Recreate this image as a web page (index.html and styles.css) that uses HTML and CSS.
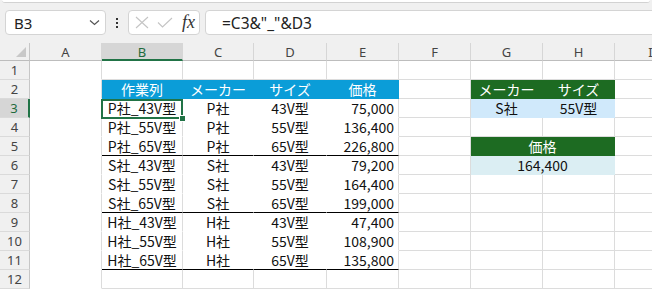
FILE: index.html
```html
<html>
<head>
    <title>Excel</title>
    <link rel="stylesheet" href="styles.css">
</head>
<body>
<div class="ribbon"></div>
<div class="toolbar">
    <div class="namebox">
        <span>B3</span>
        <svg width="11" height="7" viewBox="0 0 11 7"><path d="M1 1.5 L5.5 5.5 L10 1.5" fill="none" stroke="#555" stroke-width="1.2"/></svg>
    </div>
    <div class="more"><i></i><i></i><i></i></div>
    <div class="fxbox">
        <svg width="14" height="13" viewBox="0 0 14 13"><path d="M1 1 L13 12 M13 1 L1 12" stroke="#c4c4c4" stroke-width="1.1"/></svg>
        <svg width="16" height="11" viewBox="0 0 16 11"><path d="M1 5.5 L5.5 10 L15 1" fill="none" stroke="#c4c4c4" stroke-width="1.1"/></svg>
        <span class="fx">fx</span>
    </div>
    <div class="formula">=C3&amp;"_"&amp;D3</div>
</div>

<div class="sheet">
    <!-- column headers -->
    <div class="corner"></div>
    <div class="ch">A</div>
    <div class="ch on">B</div>
    <div class="ch">C</div>
    <div class="ch">D</div>
    <div class="ch">E</div>
    <div class="ch">F</div>
    <div class="ch">G</div>
    <div class="ch">H</div>
    <div class="ch">I</div>

    <!-- 1 -->
    <div class="rh">1</div>
    <div class="c nb"></div><div class="c"></div><div class="c"></div><div class="c"></div><div class="c"></div>
    <div class="c"></div><div class="c"></div><div class="c"></div><div class="c"></div>

    <!-- 2 -->
    <div class="rh">2</div>
    <div class="c nb"></div>
    <div class="c blue">作業列</div><div class="c blue">メーカー</div><div class="c blue">サイズ</div><div class="c blue">価格</div>
    <div class="c"></div>
    <div class="c green">メーカー</div><div class="c green">サイズ</div>
    <div class="c"></div>

    <!-- 3 -->
    <div class="rh on">3</div>
    <div class="c nb"></div>
    <div class="c nb sel">P社_43V型</div><div class="c nb nr">P社</div><div class="c nb nr">43V型</div><div class="c nb num">75,000</div>
    <div class="c"></div>
    <div class="c light">S社</div><div class="c light">55V型</div>
    <div class="c"></div>

    <!-- 4 -->
    <div class="rh">4</div>
    <div class="c nb"></div>
    <div class="c nb">P社_55V型</div><div class="c nb nr">P社</div><div class="c nb nr">55V型</div><div class="c nb num">136,400</div>
    <div class="c"></div><div class="c"></div><div class="c"></div><div class="c"></div>

    <!-- 5 -->
    <div class="rh">5</div>
    <div class="c nb"></div>
    <div class="c bk">P社_65V型</div><div class="c bk nr">P社</div><div class="c bk nr">65V型</div><div class="c bk num">226,800</div>
    <div class="c"></div>
    <div class="c green span2">価格</div>
    <div class="c"></div>

    <!-- 6 -->
    <div class="rh">6</div>
    <div class="c nb"></div>
    <div class="c nb">S社_43V型</div><div class="c nb nr">S社</div><div class="c nb nr">43V型</div><div class="c nb num">79,200</div>
    <div class="c"></div>
    <div class="c pale span2">164,400</div>
    <div class="c"></div>

    <!-- 7 -->
    <div class="rh">7</div>
    <div class="c nb"></div>
    <div class="c nb">S社_55V型</div><div class="c nb nr">S社</div><div class="c nb nr">55V型</div><div class="c nb num">164,400</div>
    <div class="c"></div><div class="c"></div><div class="c"></div><div class="c"></div>

    <!-- 8 -->
    <div class="rh">8</div>
    <div class="c nb"></div>
    <div class="c bk">S社_65V型</div><div class="c bk nr">S社</div><div class="c bk nr">65V型</div><div class="c bk num">199,000</div>
    <div class="c"></div><div class="c"></div><div class="c"></div><div class="c"></div>

    <!-- 9 -->
    <div class="rh">9</div>
    <div class="c nb"></div>
    <div class="c nb">H社_43V型</div><div class="c nb nr">H社</div><div class="c nb nr">43V型</div><div class="c nb num">47,400</div>
    <div class="c"></div><div class="c"></div><div class="c"></div><div class="c"></div>

    <!-- 10 -->
    <div class="rh">10</div>
    <div class="c nb"></div>
    <div class="c nb">H社_55V型</div><div class="c nb nr">H社</div><div class="c nb nr">55V型</div><div class="c nb num">108,900</div>
    <div class="c"></div><div class="c"></div><div class="c"></div><div class="c"></div>

    <!-- 11 -->
    <div class="rh">11</div>
    <div class="c nb"></div>
    <div class="c bk">H社_65V型</div><div class="c bk nr">H社</div><div class="c bk nr">65V型</div><div class="c bk num">135,800</div>
    <div class="c"></div><div class="c"></div><div class="c"></div><div class="c"></div>

    <!-- 12 -->
    <div class="rh">12</div>
    <div class="c nb"></div><div class="c"></div><div class="c"></div><div class="c"></div><div class="c"></div>
    <div class="c"></div><div class="c"></div><div class="c"></div><div class="c"></div>
</div>
</body>
</html>
```

FILE: styles.css
```css
body {
    margin: 0;
    width: 652px;
    height: 289px;
    overflow: hidden;
    background: #f0f0f0;
    font-family: 'Noto Sans', 'Noto Sans CJK JP', sans-serif;
    color: #222;
}

.ribbon {
    height: 2px;
    margin: 0 2px;
    background: #ffffff;
    border-bottom: 1px solid #d2d2d2;
    border-radius: 0 0 4px 4px;
}

.toolbar {
    display: flex;
    height: 25px;
    padding: 7px 0 8px 5px;
}

.namebox {
    display: flex;
    align-items: center;
    justify-content: space-between;
    box-sizing: border-box;
    width: 101px;
    padding: 0 5px 0 8px;
    background: #ffffff;
    border: 1px solid #d4d4d4;
    border-radius: 4px;
    font-size: 15px;
}

.more {
    display: flex;
    flex-direction: column;
    align-items: center;
    justify-content: center;
    gap: 2px;
    width: 22px;
}

.more i {
    display: block;
    width: 2px;
    height: 2px;
    background: #333;
}

.fxbox {
    display: flex;
    align-items: center;
    box-sizing: border-box;
    width: 72px;
    padding: 0 4px 0 6px;
    gap: 8px;
    background: #ffffff;
    border: 1px solid #d4d4d4;
    border-radius: 4px;
}

.fx {
    margin-left: auto;
    font-family: 'Liberation Serif', serif;
    font-style: italic;
    font-size: 18px;
    color: #333;
}

.formula {
    flex: 1;
    display: flex;
    align-items: center;
    box-sizing: border-box;
    margin-left: 5px;
    margin-right: -8px;
    padding-left: 16px;
    background: #ffffff;
    border: 1px solid #d4d4d4;
    border-radius: 4px;
    font-size: 15.5px;
}

.sheet {
    display: grid;
    grid-template-columns: 30px 72px 81px 71px 73px 72px 72px 72px 72px 72px;
    grid-template-rows: 18px repeat(12, 19px);
    width: 652px;
    overflow: hidden;
    background: #ffffff;
}

.corner, .ch, .rh {
    box-sizing: border-box;
    background: #f0f0f0;
    font-family: 'Noto Sans', sans-serif;
    font-size: 13px;
    color: #444;
    display: flex;
    align-items: center;
    justify-content: center;
}

.corner {
    position: relative;
    border-right: 1px solid #c6c6c6;
    border-bottom: 1px solid #bdbdbd;
}

.corner:after {
    content: "";
    position: absolute;
    right: 3px;
    bottom: 3px;
    border-left: 10px solid transparent;
    border-bottom: 10px solid #c8c8c8;
}

.ch {
    border-right: 1px solid #d6d6d6;
    border-bottom: 1px solid #bdbdbd;
    padding-top: 1px;
}

.ch.on {
    background: #d6d6d6;
    color: #1f6b3d;
    border-bottom: 2px solid #217346;
}

.rh {
    border-right: 1px solid #c6c6c6;
    border-bottom: 1px solid #dadada;
}

.rh.on {
    background: #d6d6d6;
    color: #1f6b3d;
    border-right: 2px solid #217346;
}

.c {
    box-sizing: border-box;
    display: flex;
    align-items: center;
    justify-content: center;
    border-right: 1px solid #dcdcdc;
    border-bottom: 1px solid #dcdcdc;
    font-family: 'Noto Sans CJK JP', sans-serif;
    font-size: 14px;
    color: #111;
    white-space: nowrap;
}

.c.nb {
    border-bottom-color: #ffffff;
}

.c.nr {
    border-right-color: #ffffff;
}

.c.bk {
    border-bottom-color: #000000;
}

.c.num {
    justify-content: flex-end;
    padding-right: 4px;
}

.c.blue {
    background: #0b9dd8;
    border-color: #0b9dd8;
    color: #ffffff;
}

.c.green {
    background: #1d6b22;
    border-color: #1d6b22;
    color: #ffffff;
}

.c.light {
    background: #d0e9fb;
    border-color: #d0e9fb;
}

.c.pale {
    background: #dbeef3;
    border-color: #dbeef3;
}

.c.span2 {
    grid-column: span 2;
}

.c.sel {
    position: relative;
}

.c.sel:before {
    content: "";
    position: absolute;
    left: -1px;
    top: 0;
    right: -1px;
    bottom: -2px;
    border: 2px solid #217346;
}

.c.sel:after {
    content: "";
    position: absolute;
    right: -4px;
    bottom: -5px;
    width: 5px;
    height: 5px;
    background: #217346;
    border: 1px solid #ffffff;
}
```
